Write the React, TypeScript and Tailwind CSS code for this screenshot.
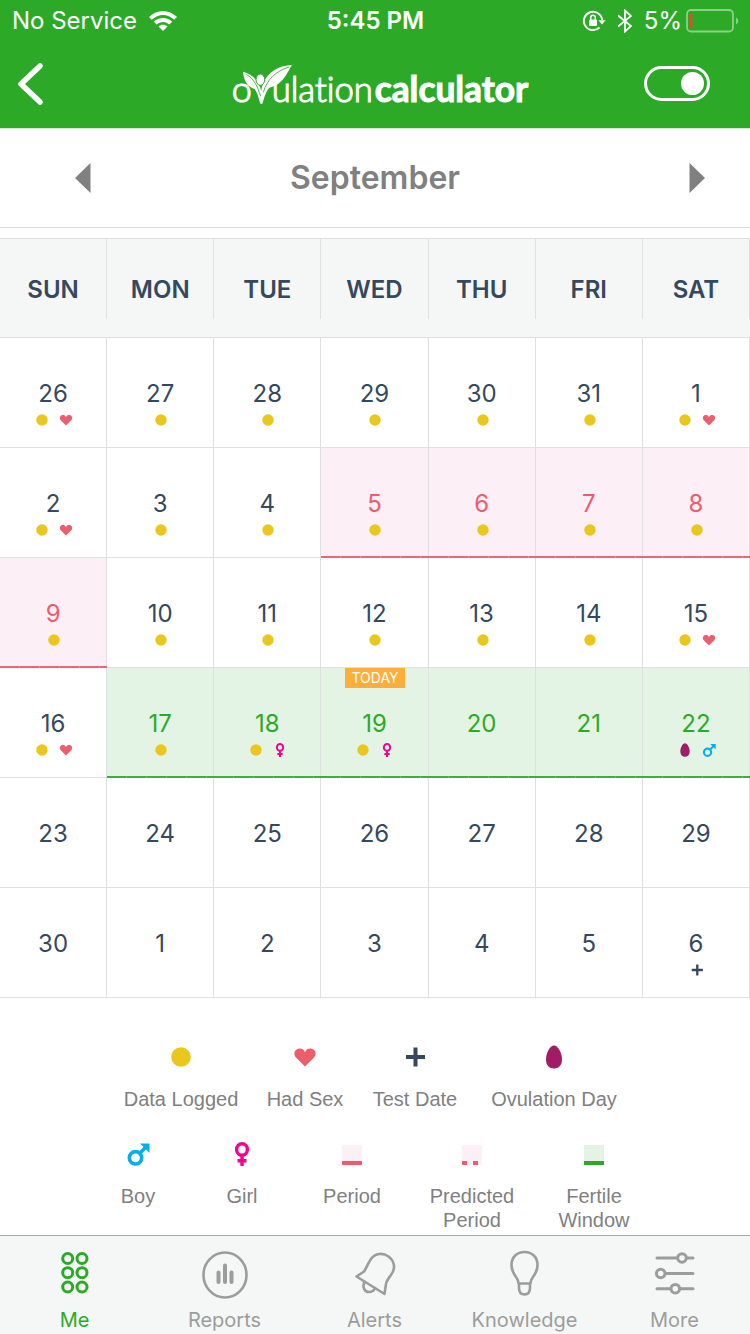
import React, { useState } from 'react';

type Marker = 'logged' | 'sex' | 'test' | 'ovulation' | 'boy' | 'girl';
type Phase = 'none' | 'period' | 'fertile';

interface Day {
  date: number;
  markers?: Marker[];
  phase?: Phase;
  today?: boolean;
}

const weekdays = ['SUN', 'MON', 'TUE', 'WED', 'THU', 'FRI', 'SAT'];

const weeks: Day[][] = [
  [
    { date: 26, markers: ['logged', 'sex'] },
    { date: 27, markers: ['logged'] },
    { date: 28, markers: ['logged'] },
    { date: 29, markers: ['logged'] },
    { date: 30, markers: ['logged'] },
    { date: 31, markers: ['logged'] },
    { date: 1, markers: ['logged', 'sex'] },
  ],
  [
    { date: 2, markers: ['logged', 'sex'] },
    { date: 3, markers: ['logged'] },
    { date: 4, markers: ['logged'] },
    { date: 5, markers: ['logged'], phase: 'period' },
    { date: 6, markers: ['logged'], phase: 'period' },
    { date: 7, markers: ['logged'], phase: 'period' },
    { date: 8, markers: ['logged'], phase: 'period' },
  ],
  [
    { date: 9, markers: ['logged'], phase: 'period' },
    { date: 10, markers: ['logged'] },
    { date: 11, markers: ['logged'] },
    { date: 12, markers: ['logged'] },
    { date: 13, markers: ['logged'] },
    { date: 14, markers: ['logged'] },
    { date: 15, markers: ['logged', 'sex'] },
  ],
  [
    { date: 16, markers: ['logged', 'sex'] },
    { date: 17, markers: ['logged'], phase: 'fertile' },
    { date: 18, markers: ['logged', 'girl'], phase: 'fertile' },
    { date: 19, markers: ['logged', 'girl'], phase: 'fertile', today: true },
    { date: 20, phase: 'fertile' },
    { date: 21, phase: 'fertile' },
    { date: 22, markers: ['ovulation', 'boy'], phase: 'fertile' },
  ],
  [{ date: 23 }, { date: 24 }, { date: 25 }, { date: 26 }, { date: 27 }, { date: 28 }, { date: 29 }],
  [{ date: 30 }, { date: 1 }, { date: 2 }, { date: 3 }, { date: 4 }, { date: 5 }, { date: 6, markers: ['test'] }],
];

const phaseStyles: Record<Phase, { cell: string; line: string }> = {
  none: { cell: 'text-[#34495e]', line: 'h-px bg-[#dfe1e1]' },
  period: {
    cell: 'bg-[#fdeff6] text-[#ee5c6c]',
    line: 'h-[2px] bg-[repeating-linear-gradient(90deg,#e96876_0_19px,#ee8c98_19px_20px)]',
  },
  fertile: {
    cell: 'bg-[#e4f4e4] text-[#2caa27]',
    line: 'h-[2px] bg-[repeating-linear-gradient(90deg,#3bb036_0_19px,#60be5b_19px_20px)]',
  },
};

function MarkerIcon({ type, className }: { type: Marker; className: string }) {
  return (
    <svg viewBox="0 0 24 24" className={className} fill="none" aria-hidden="true">
      {type === 'logged' && <circle cx="12" cy="12" r="9.8" fill="#eac71d" />}
      {type === 'sex' && (
        <path
          d="M12 21.500 3 12.600C.6 9.800 1 6 3.600 4.400C6.500 2.800 10.500 3.400 12 7.200C13.500 3.400 17.500 2.800 20.400 4.400C23 6 23.400 9.800 21 12.600Z"
          fill="#eb5e6b"
        />
      )}
      {type === 'test' && <path d="M12.500 2.500V21.500M3 12H22" stroke="#34495e" strokeWidth="4" />}
      {type === 'ovulation' && (
        <path d="M12 .5C16 .5 20 8 20 14.500C20 20.500 16.500 23.500 12 23.500S4 20.500 4 14.500C4 8 8 .5 12 .5Z" fill="#a01d65" />
      )}
      {type === 'boy' && (
        <>
          <circle cx="9.500" cy="15.800" r="6.200" stroke="#06aeef" strokeWidth="3.600" />
          <path d="M14 11 20.500 4.500" stroke="#06aeef" strokeWidth="3.600" />
          <path d="M14 1.500H23.500V11L20 7.500 17.500 5Z" fill="#06aeef" />
        </>
      )}
      {type === 'girl' && (
        <>
          <ellipse cx="12" cy="7.500" rx="5.400" ry="5.800" stroke="#f0058f" strokeWidth="3.400" />
          <path d="M12 13V24M7.500 18.700H16.500" stroke="#f0058f" strokeWidth="3.400" />
        </>
      )}
    </svg>
  );
}

function StatusBar() {
  return (
    <div className="grid h-10 grid-cols-3 items-center pl-3 pr-[11px] pt-px text-2xl">
      <div className="flex items-center gap-3">
        <span>No Service</span>
        <svg viewBox="0 0 28 20" className="h-5 w-7" aria-label="Wi-Fi">
          <path d="M0 6C8-2 20-2 28 6L25.200 8.800C18.500 2.500 9.500 2.500 2.800 8.800Z" fill="#fff" />
          <path d="M4.800 10.800C10 5.800 18 5.800 23.200 10.800L20.400 13.600C16.500 10 11.500 10 7.600 13.600Z" fill="#fff" />
          <path d="M9.500 15.500C12 13.200 16 13.200 18.500 15.500L14 20Z" fill="#fff" />
        </svg>
      </div>
      <span className="text-center font-semibold">5:45 PM</span>
      <div className="flex items-center justify-end gap-3">
        <svg viewBox="0 0 24 22" className="h-[22px] w-6" fill="none" aria-hidden="true">
          <path d="M17.500 17.500A9.200 9.200 0 1 1 20.200 10" stroke="#fff" strokeWidth="1.900" />
          <path d="M16.500 10.200H23.500L20 14.500Z" fill="#fff" />
          <rect x="7" y="9.500" width="8" height="6.500" rx="1" fill="#fff" />
          <path d="M8.700 10V7.500A2.300 2.300 0 0 1 13.300 7.500V10" stroke="#fff" strokeWidth="1.500" />
        </svg>
        <svg viewBox="0 0 14 24" className="h-6 w-[14px]" fill="none" aria-hidden="true">
          <path d="M0 6.500 13 17 7 22.500V1.500L13 7 0 17.500" stroke="#fff" strokeWidth="1.800" />
        </svg>
        <div className="flex items-center gap-1">
          <span>5%</span>
          <svg viewBox="0 0 53 24" className="h-6 w-[53px]" fill="none" aria-hidden="true">
            <rect x="1" y="1" width="46" height="21.500" rx="4" stroke="#8cd089" strokeWidth="1.800" />
            <rect x="4" y="4.500" width="2.200" height="15" fill="#ff3b30" />
            <path d="M50 8.500C53 10 53 14 50 15.500Z" fill="#8cd089" />
          </svg>
        </div>
      </div>
    </div>
  );
}

function Logo() {
  return (
    <svg viewBox="18 -21 930 216" className="h-[72px] w-[310px]" fill="#fff" role="img" aria-label="ovulation calculator">
      <g fontFamily="Lato, sans-serif" className="[font-variant-ligatures:none]">
        <text x="35" y="140" fontSize="108" fontWeight="300" stroke="#fff" strokeWidth="3.500">o</text>
        <text x="155" y="140" fontSize="104" fontWeight="300" stroke="#fff" strokeWidth="3.500">ulation</text>
        <text x="464" y="140" fontSize="106" fontWeight="700" stroke="#fff" strokeWidth="3">calculator</text>
      </g>
      <path d="M69 50C96 57 116 76 124 108C130 60 168 32 216 30C202 50 192 88 148 98C136 112 132 130 128 144Q124 150 120 144C116 128 112 114 104 102C82 94 72 78 69 50Z" />
      <path
        d="M79 58C102 72 112 92 122 124M207 36C166 50 142 72 130 112"
        fill="none"
        stroke="#2caa27"
        strokeWidth="2.500"
      />
      <ellipse cx="121" cy="74" rx="13" ry="17" stroke="#2caa27" strokeWidth="3" />
    </svg>
  );
}

function Header() {
  const [enabled, setEnabled] = useState(true);

  return (
    <header className="border-b border-[#d5ead4] bg-[#2caa27] text-white">
      <StatusBar />
      <div className="flex h-[88px] items-center justify-between pl-4 pr-10">
        <button type="button" aria-label="Back" className="w-[102px]">
          <svg viewBox="0 0 28 44" className="h-11 w-7" fill="none">
            <path d="M24 4 5 22 24 40" stroke="#fff" strokeWidth="5.500" strokeLinecap="round" strokeLinejoin="round" />
          </svg>
        </button>
        <Logo />
        <label className="cursor-pointer pb-[2px]">
          <input
            type="checkbox"
            role="switch"
            aria-label="Calendar view"
            className="peer sr-only"
            checked={enabled}
            onChange={(e) => setEnabled(e.target.checked)}
          />
          <span className="flex h-[35px] w-[66px] items-center rounded-full border-[3px] border-white px-[3px] peer-checked:justify-end">
            <span className="h-[23px] w-[23px] rounded-full bg-white"></span>
          </span>
        </label>
      </div>
    </header>
  );
}

function MonthPicker() {
  return (
    <div className="flex h-[99px] items-center justify-between border-b border-[#dfe1e1] pl-[75px] pr-[45px]">
      <button type="button" aria-label="Previous month" className="w-4">
        <svg viewBox="0 0 16 30" className="h-[30px] w-4">
          <path d="M15.500 0V30L0 15Z" fill="#808080" />
        </svg>
      </button>
      <h1 className="text-[32px] font-semibold text-[#808080]">September</h1>
      <button type="button" aria-label="Next month" className="flex w-[46px] justify-end">
        <svg viewBox="0 0 16 30" className="h-[30px] w-4">
          <path d="M.5 0V30L16 15Z" fill="#808080" />
        </svg>
      </button>
    </div>
  );
}

function DayCell({ day }: { day: Day }) {
  const style = phaseStyles[day.phase || 'none'];

  return (
    <td className={`p-0 ${style.cell}`}>
      <div className="relative flex h-[110px] flex-col">
        {day.today && (
          <span className="absolute left-1/2 top-0 h-5 w-[60px] -translate-x-1/2 bg-[#fdae3a] text-center text-sm leading-5 text-white">
            TODAY
          </span>
        )}
        <div className="flex-1 border-r border-[#dfe1e1] pt-10">
          <div className="text-center text-2xl">{day.date}</div>
          <div className="mt-[3px] flex justify-center gap-[10px] pl-[2px]">
            {(day.markers || []).map((marker) => (
              <MarkerIcon key={marker} type={marker} className="h-[14px] w-[14px]" />
            ))}
          </div>
        </div>
        <div className={style.line}></div>
      </div>
    </td>
  );
}

function Calendar() {
  return (
    <table className="mt-[10px] w-full table-fixed border-separate border-spacing-0 border-t border-[#dfe1e1]">
      <thead>
        <tr>
          {weekdays.map((name) => (
            <th key={name} scope="col" className="h-[99px] border-b border-[#dfe1e1] bg-[#f5f7f6] p-0 align-top">
              <div className="flex h-20 items-end justify-center border-r border-[#dfe1e1] pb-[13px] text-2xl font-semibold text-[#34495e]">
                {name}
              </div>
            </th>
          ))}
        </tr>
      </thead>
      <tbody>
        {weeks.map((week, i) => (
          <tr key={i}>
            {week.map((day) => (
              <DayCell key={day.date} day={day} />
            ))}
          </tr>
        ))}
      </tbody>
    </table>
  );
}

function LegendItem({ icon, label, className }: { icon: React.ReactNode; label: React.ReactNode; className: string }) {
  return (
    <li className={`flex flex-col items-center gap-[18px] ${className}`}>
      {icon}
      <span className="text-center text-xl leading-6">{label}</span>
    </li>
  );
}

function Swatch({ fill, children }: { fill: string; children: React.ReactNode }) {
  return (
    <span className="flex h-6 items-end pb-px">
      <span className={`flex h-5 w-5 items-end ${fill}`}>{children}</span>
    </span>
  );
}

function Legend() {
  return (
    <section className="flex flex-col gap-[31px] pb-[2px] pt-[47px] font-['Liberation_Sans',Arial,sans-serif] text-[#808080]">
      <ul className="flex justify-center">
        <LegendItem className="w-[138px]" icon={<MarkerIcon type="logged" className="h-6 w-6" />} label="Data Logged" />
        <LegendItem className="w-[110px]" icon={<MarkerIcon type="sex" className="h-6 w-6" />} label="Had Sex" />
        <LegendItem className="w-[110px]" icon={<MarkerIcon type="test" className="h-6 w-6" />} label="Test Date" />
        <LegendItem className="w-[168px]" icon={<MarkerIcon type="ovulation" className="h-6 w-6" />} label="Ovulation Day" />
      </ul>
      <ul className="flex justify-center pr-[10px]">
        <LegendItem className="w-[104px]" icon={<MarkerIcon type="boy" className="h-6 w-6" />} label="Boy" />
        <LegendItem className="w-[104px]" icon={<MarkerIcon type="girl" className="h-6 w-6" />} label="Girl" />
        <LegendItem
          className="w-[116px]"
          icon={
            <Swatch fill="bg-[#fdeff6]">
              <span className="h-1 w-full bg-[#ee5c6c]"></span>
            </Swatch>
          }
          label="Period"
        />
        <LegendItem
          className="w-[124px]"
          icon={
            <Swatch fill="bg-[#fdeff6]">
              <span className="flex gap-[6px]">
                <span className="h-1 w-[5px] bg-[#ee5c6c]"></span>
                <span className="h-1 w-[5px] bg-[#ee5c6c]"></span>
              </span>
            </Swatch>
          }
          label={<>Predicted<br />Period</>}
        />
        <LegendItem
          className="w-[120px]"
          icon={
            <Swatch fill="bg-[#e4f4e4]">
              <span className="h-1 w-full bg-[#2caa27]"></span>
            </Swatch>
          }
          label={<>Fertile<br />Window</>}
        />
      </ul>
    </section>
  );
}

const tabs = [
  {
    label: 'Me',
    icon: (
      <g strokeWidth="3">
        <circle cx="16.700" cy="7.500" r="5" />
        <circle cx="31" cy="7.500" r="5" />
        <circle cx="16.700" cy="21.700" r="5" />
        <circle cx="31" cy="21.700" r="5" />
        <circle cx="16.700" cy="36" r="5" />
        <circle cx="31" cy="36" r="5" />
      </g>
    ),
  },
  {
    label: 'Reports',
    icon: (
      <>
        <ellipse cx="24" cy="24" rx="21.500" ry="22.500" />
        <path d="M17.500 21.500V31M24 14.500V31M30.500 21.500V31" strokeWidth="4" />
      </>
    ),
  },
  {
    label: 'Alerts',
    icon: (
      <>
        <path d="M5.500 25.500 13 20.500C15.500 17 17 12 20 8C24 2 32 1.500 37.500 5.500C43 9.500 44.500 16 41.500 21.500C39 26 35.500 29 35 33L33.500 43Z" />
        <path d="M13.500 31C11 36 13.500 41 18 41C21 41 23 39.500 24 37" />
      </>
    ),
  },
  {
    label: 'Knowledge',
    icon: (
      <path d="M17.500 32.500C17.500 29 16 27.500 14 24.500C12 21.500 10.500 18.500 10.500 14C10.500 6 16 1 23.500 1S36.500 6 36.500 14C36.500 18.500 35 21.500 33 24.500C31 27.500 29.500 29 29.500 32.500M17.500 32.500H29.500M18 33V37C18 41 20 43.500 23.500 43.500S29 41 29 37V33" />
    ),
  },
  {
    label: 'More',
    icon: (
      <g strokeWidth="3">
        <path d="M6 7H26.500M36 7H42M14.500 22.500H42M6 37.700H19.500M29 37.700H42" />
        <circle cx="31" cy="7" r="4.300" />
        <circle cx="9.700" cy="22.500" r="4.300" />
        <circle cx="24.300" cy="37.700" r="4.300" />
      </g>
    ),
  },
];

function TabBar() {
  return (
    <nav className="grid h-[99px] grid-cols-5 border-t border-[#a9abaa] bg-[#f5f7f6]">
      {tabs.map((tab, i) => (
        <a
          key={tab.label}
          href="#"
          className={`flex flex-col items-center gap-[9px] pr-px pt-[15px] text-xl leading-6 ${i === 0 ? 'text-[#2caa27]' : 'text-[#9b9d9c]'}`}
        >
          <svg
            viewBox="0 0 48 48"
            className="h-12 w-12 overflow-visible"
            fill="none"
            stroke="currentColor"
            strokeWidth="2.600"
            strokeLinecap="round"
            strokeLinejoin="round"
            aria-hidden="true"
          >
            {tab.icon}
          </svg>
          {tab.label}
        </a>
      ))}
    </nav>
  );
}

export default function App() {
  return (
    <div className="flex min-h-screen flex-col bg-white font-[Inter,sans-serif]">
      <Header />
      <main className="flex-1">
        <MonthPicker />
        <Calendar />
        <Legend />
      </main>
      <TabBar />
    </div>
  );
}
